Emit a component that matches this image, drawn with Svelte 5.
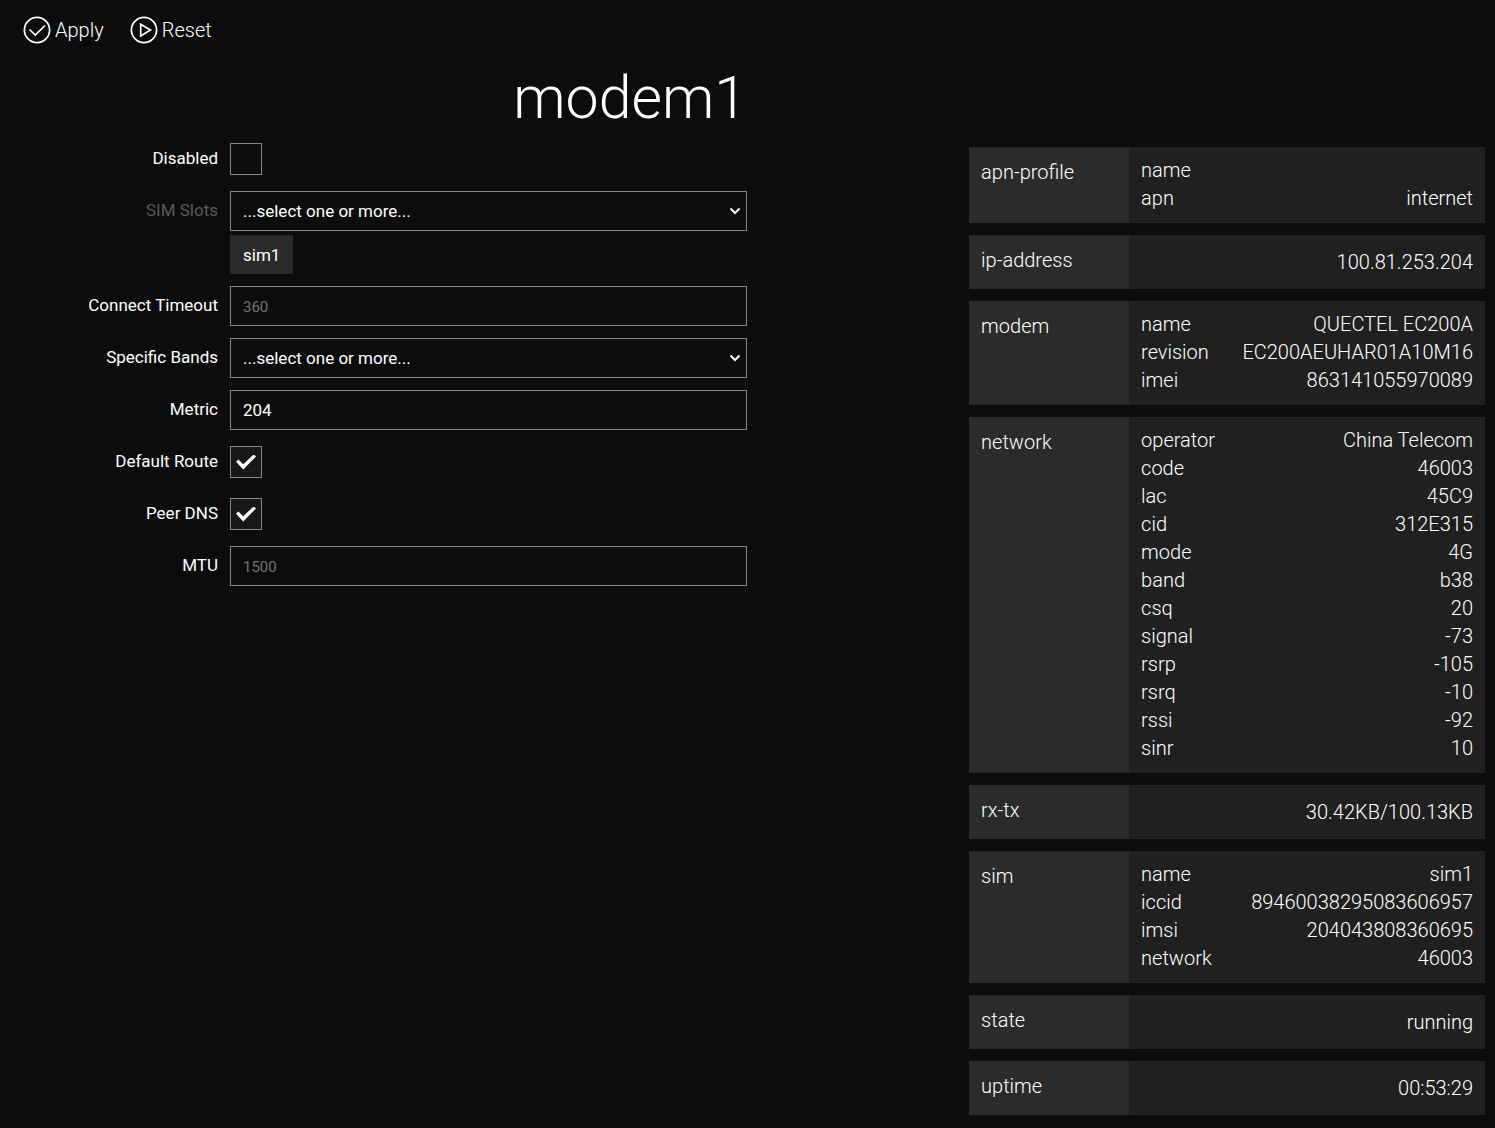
<script>
  const placeholder = '...select one or more...'

  const initial = {
    disabled: false,
    sims: ['sim1'],
    timeout: '',
    bands: [],
    metric: '204',
    defaultRoute: true,
    peerDns: true,
    mtu: ''
  }

  const simOptions = ['sim1', 'sim2']
  const bandOptions = ['b1', 'b3', 'b5', 'b8', 'b34', 'b38', 'b39', 'b40', 'b41']

  const status = [
    { name: 'apn-profile', rows: [['name', ''], ['apn', 'internet']] },
    { name: 'ip-address', value: '100.81.253.204' },
    {
      name: 'modem',
      rows: [
        ['name', 'QUECTEL EC200A'],
        ['revision', 'EC200AEUHAR01A10M16'],
        ['imei', '863141055970089']
      ]
    },
    {
      name: 'network',
      rows: [
        ['operator', 'China Telecom'],
        ['code', '46003'],
        ['lac', '45C9'],
        ['cid', '312E315'],
        ['mode', '4G'],
        ['band', 'b38'],
        ['csq', '20'],
        ['signal', '-73'],
        ['rsrp', '-105'],
        ['rsrq', '-10'],
        ['rssi', '-92'],
        ['sinr', '10']
      ]
    },
    { name: 'rx-tx', value: '30.42KB/100.13KB' },
    {
      name: 'sim',
      rows: [
        ['name', 'sim1'],
        ['iccid', '89460038295083606957'],
        ['imsi', '204043808360695'],
        ['network', '46003']
      ]
    },
    { name: 'state', value: 'running' },
    { name: 'uptime', value: '00:53:29' }
  ]

  let form = $state(structuredClone(initial))

  function reset() {
    form = structuredClone(initial)
  }

  function add(key, event) {
    const value = event.target.value
    if (value && !form[key].includes(value)) {
      form[key].push(value)
    }
    event.target.value = ''
  }

  function remove(key, value) {
    form[key] = form[key].filter(v => v !== value)
  }
</script>

{#snippet check(id, label, key)}
  <div class="row">
    <label for={id}>{label}</label>
    <div class="field">
      <input type="checkbox" {id} bind:checked={form[key]} />
    </div>
  </div>
{/snippet}

{#snippet text(id, label, key, hint)}
  <div class="row">
    <label for={id}>{label}</label>
    <div class="field">
      <input type="text" {id} placeholder={hint} bind:value={form[key]} />
    </div>
  </div>
{/snippet}

{#snippet multi(id, label, key, options, inactive)}
  <div class="row">
    <label for={id} class:inactive>{label}</label>
    <div class="field">
      <div class="select">
        <select {id} onchange={e => add(key, e)}>
          <option value="">{placeholder}</option>
          {#each options as option}
            <option value={option}>{option}</option>
          {/each}
        </select>
        <svg viewBox="0 0 12 8" aria-hidden="true"><path d="M1.5 1.5 6 6l4.500-4.500" /></svg>
      </div>
      {#if form[key].length}
        <div class="tags">
          {#each form[key] as value (value)}
            <button type="button" class="tag" onclick={() => remove(key, value)}>{value}</button>
          {/each}
        </div>
      {/if}
    </div>
  </div>
{/snippet}

<main>
  <div class="toolbar">
    <button type="submit" form="modem">
      <svg viewBox="0 0 28 28" aria-hidden="true">
        <circle cx="14" cy="14" r="12.600" />
        <path d="M6.500 13.500l5.800 5.600 9.600-9.600" />
      </svg>
      Apply
    </button>
    <button type="button" onclick={reset}>
      <svg viewBox="0 0 28 28" aria-hidden="true">
        <circle cx="14" cy="14" r="12.600" />
        <path d="M10.700 8.300v11.600l9.700-5.800z" />
      </svg>
      Reset
    </button>
  </div>

  <div class="columns">
    <form id="modem" onsubmit={e => e.preventDefault()}>
      <h1>modem1</h1>
      {@render check('disabled', 'Disabled', 'disabled')}
      {@render multi('sims', 'SIM Slots', 'sims', simOptions, true)}
      {@render text('timeout', 'Connect Timeout', 'timeout', '360')}
      {@render multi('bands', 'Specific Bands', 'bands', bandOptions, false)}
      {@render text('metric', 'Metric', 'metric', '')}
      {@render check('default-route', 'Default Route', 'defaultRoute')}
      {@render check('peer-dns', 'Peer DNS', 'peerDns')}
      {@render text('mtu', 'MTU', 'mtu', '1500')}
    </form>

    <div class="status">
      {#each status as item}
        <section>
          <h2>{item.name}</h2>
          {#if item.rows}
            <dl>
              {#each item.rows as [key, value]}
                <div>
                  <dt>{key}</dt>
                  <dd>{value}</dd>
                </div>
              {/each}
            </dl>
          {:else}
            <p>{item.value}</p>
          {/if}
        </section>
      {/each}
    </div>
  </div>
</main>

<style>
  :global(body) {
    background: #0c0c0c;
  }

  main {
    padding: 12px 10px;
    color: #fff;
    font-family: Roboto, "Liberation Sans", sans-serif;
    font-size: 17px;
  }

  button,
  input,
  select {
    box-sizing: border-box;
    margin: 0;
    color: inherit;
    font: inherit;
    border-radius: 0;
  }

  .toolbar {
    display: flex;
    gap: 26px;
    padding-left: 13px;
  }

  .toolbar button {
    display: flex;
    align-items: center;
    gap: 4px;
    padding: 0;
    border: none;
    background: none;
    font-size: 20px;
    font-weight: 300;
    line-height: 36px;
    cursor: pointer;
  }

  .toolbar svg {
    width: 28px;
    height: 28px;
    fill: none;
    stroke: #fff;
    stroke-width: 1.7;
  }

  .columns {
    display: grid;
    grid-template-columns: 1fr 1fr;
    column-gap: 1px;
  }

  form {
    display: flex;
    flex-direction: column;
    gap: 12px;
  }

  h1 {
    margin: 0;
    padding-top: 21px;
    font-size: 59px;
    font-weight: 300;
    line-height: 58px;
    text-align: right;
  }

  .row {
    display: grid;
    grid-template-columns: 220px 1fr;
  }

  label {
    padding-right: 12px;
    line-height: 38px;
    text-align: right;
  }

  .inactive {
    color: #5a5a5a;
  }

  .field {
    display: flex;
    flex-direction: column;
    gap: 4px;
    min-width: 0;
  }

  input[type="text"],
  select {
    appearance: none;
    width: 100%;
    height: 40px;
    padding: 0 12px;
    border: 1px solid #868686;
    background: #0c0c0c;
    outline: none;
  }

  input::placeholder {
    color: #757575;
    font-size: 15px;
    opacity: 1;
  }

  .select {
    display: grid;
    align-items: center;
  }

  .select select,
  .select svg {
    grid-area: 1 / 1;
  }

  .select svg {
    justify-self: end;
    width: 12px;
    height: 8px;
    margin-right: 6px;
    fill: none;
    stroke: #fff;
    stroke-width: 2;
    pointer-events: none;
  }

  input[type="checkbox"] {
    appearance: none;
    display: grid;
    place-items: center;
    width: 32px;
    height: 32px;
    margin: 4px 0;
    border: 1px solid #868686;
  }

  input[type="checkbox"]:checked {
    background: #181818;
  }

  input[type="checkbox"]:checked::before {
    content: "";
    width: 20px;
    height: 15px;
    background: #fff;
    clip-path: polygon(0 48%, 12% 33%, 36% 65%, 88% 0, 100% 14%, 36% 100%);
  }

  .tags {
    display: flex;
    flex-wrap: wrap;
    gap: 4px;
  }

  .tag {
    height: 39px;
    padding: 0 13px;
    border: none;
    background: #2b2b2b;
    cursor: pointer;
  }

  .status {
    display: flex;
    flex-direction: column;
    gap: 12px;
    margin: 99px 0 0 30%;
    font-size: 20px;
    font-weight: 300;
    line-height: 28px;
  }

  section {
    display: grid;
    grid-template-columns: 160px 1fr;
    background: #202020;
  }

  h2 {
    margin: 0;
    padding: 11px 12px;
    background: #2b2b2b;
    font-size: inherit;
    font-weight: inherit;
  }

  dl,
  p {
    margin: 0;
    padding: 9px 12px 11px;
  }

  p {
    padding: 13px 12px;
    text-align: right;
  }

  dl div {
    display: flex;
    justify-content: space-between;
  }

  dd {
    margin: 0;
  }
</style>
